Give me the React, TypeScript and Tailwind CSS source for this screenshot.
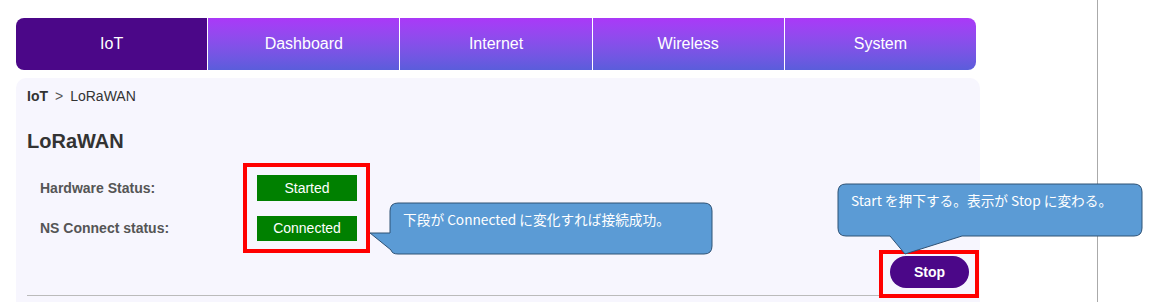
import React from 'react';

const tabs = ['IoT', 'Dashboard', 'Internet', 'Wireless', 'System'];

function Callout1() {
  return (
    <div className="absolute left-[368px] top-[200px] w-[348px] h-[58px]">
      <svg width="348" height="58" className="absolute inset-0">
        <path
          d="M30,3 H336 Q344,3 344,11 V46 Q344,54 336,54 H30 Q24,54 23,50 L2,33 H22 V11 Q22,3 30,3 Z"
          fill="#5b9bd5"
          stroke="#2f5275"
          strokeWidth="1"
        />
      </svg>
      <span className="absolute left-[35px] top-[10px] text-[13.7px] leading-[18px] text-white whitespace-nowrap [font-family:'Noto_Sans_CJK_JP',sans-serif]">
        下段が Connected に変化すれば接続成功。
      </span>
    </div>
  );
}

function Callout2() {
  return (
    <div className="absolute left-[836px] top-[182px] w-[310px] h-[76px]">
      <svg width="310" height="76" className="absolute inset-0">
        <path
          d="M10,2 H298 Q306,2 306,10 V46 Q306,54 298,54 H126 L69,72 L54,54 H10 Q2,54 2,46 V10 Q2,2 10,2 Z"
          fill="#5b9bd5"
          stroke="#2f5275"
          strokeWidth="1"
        />
      </svg>
      <span className="absolute left-[15px] top-[9px] text-[13.7px] leading-[18px] text-white whitespace-nowrap [font-family:'Noto_Sans_CJK_JP',sans-serif]">
        Start を押下する。表示が Stop に変わる。
      </span>
    </div>
  );
}

export default function App() {
  return (
    <div className="relative w-[1152px] h-[302px] bg-white overflow-hidden [font-family:'Liberation_Sans',Arial,sans-serif]">
      <div className="w-[1098px] h-full border-r border-[#aaaaaa] pt-[18px] pl-4">
        {/* top nav */}
        <div className="flex w-[960px] h-[52px] rounded-lg overflow-hidden">
          {tabs.map((t, i) => (
            <div
              key={t}
              className={`flex-1 flex items-center justify-center text-white text-[16px] ${
                i === 0 ? 'bg-[#4b0788]' : 'border-l border-white bg-gradient-to-b from-[#aa38f8] to-[#5a5ddb]'
              }`}
            >
              {t}
            </div>
          ))}
        </div>

        {/* panel */}
        <div className="mt-2 w-[964px] h-[240px] rounded-[10px] bg-[#f7f6fe] px-[11px] pt-[9px]">
          <div className="text-[14px] leading-[18px] text-[#333]">
            <span className="font-bold">IoT</span>
            <span className="mx-[7px] text-[#555]">&gt;</span>
            <span>LoRaWAN</span>
          </div>

          <h2 className="mt-[24px] text-[20px] leading-[24px] font-bold text-[#333]">LoRaWAN</h2>

          <div className="mt-[22px] ml-[13px] grid grid-cols-[217px_100px] gap-y-[15px] items-center">
            <div className="text-[14px] font-bold text-[#555]">Hardware Status:</div>
            <div className="h-[26px] bg-[#008000] text-white text-[14px] flex items-center justify-center">Started</div>
            <div className="text-[14px] font-bold text-[#555]">NS Connect status:</div>
            <div className="h-[25px] bg-[#008000] text-white text-[14px] flex items-center justify-center">Connected</div>
          </div>

          <div className="flex justify-end mt-[15px]">
            <button className="w-[79px] h-[32px] rounded-full bg-[#4b0788] text-white text-[14px] font-bold">Stop</button>
          </div>

          <div className="mt-[7px] border-t border-[#bbbbbb]" />
        </div>
      </div>

      {/* annotations */}
      <div className="absolute left-[243px] top-[163px] w-[127px] h-[90px] border-4 border-[#ff0000]" />
      <div className="absolute left-[879px] top-[250px] w-[100px] h-[48px] border-4 border-[#ff0000]" />
      <Callout1 />
      <Callout2 />
    </div>
  );
}
